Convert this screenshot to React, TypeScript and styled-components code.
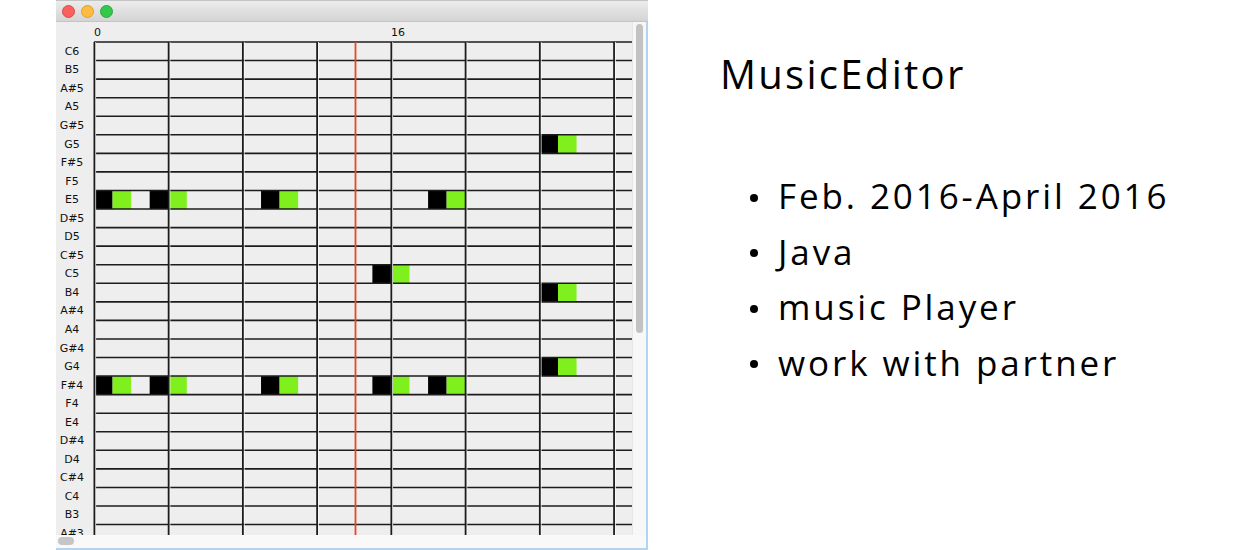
import styled, { createGlobalStyle } from 'styled-components';

// one beat / one pitch row, in px
const CELL = 18.56;
const BEATS = 32;
const PLAYHEAD = 261.5;

const PITCHES = [
    'C6', 'B5', 'A#5', 'A5', 'G#5', 'G5', 'F#5', 'F5', 'E5', 'D#5', 'D5', 'C#5', 'C5', 'B4',
    'A#4', 'A4', 'G#4', 'G4', 'F#4', 'F4', 'E4', 'D#4', 'D4', 'C#4', 'C4', 'B3', 'A#3',
];

const NOTES: { pitch: string; start: number; length: number }[] = [
    { pitch: 'G5', start: 24, length: 2 },
    { pitch: 'E5', start: 0, length: 2 },
    { pitch: 'E5', start: 3, length: 2 },
    { pitch: 'E5', start: 9, length: 2 },
    { pitch: 'E5', start: 18, length: 2 },
    { pitch: 'C5', start: 15, length: 2 },
    { pitch: 'B4', start: 24, length: 2 },
    { pitch: 'G4', start: 24, length: 2 },
    { pitch: 'F#4', start: 0, length: 2 },
    { pitch: 'F#4', start: 3, length: 2 },
    { pitch: 'F#4', start: 9, length: 2 },
    { pitch: 'F#4', start: 15, length: 2 },
    { pitch: 'F#4', start: 18, length: 2 },
];

const FACTS = ['Feb. 2016-April 2016', 'Java', 'music Player', 'work with partner'];

const GlobalStyle = createGlobalStyle`
    html, body {
        margin: 0;
        padding: 0;
        background: #fff;
    }
    body {
        width: 1250px;
        height: 550px;
        overflow: hidden;
    }
`;

const Page = styled.div`
    display: flex;
    align-items: flex-start;
    width: 1250px;
    height: 550px;
`;

const Window = styled.div`
    margin-left: 56px;
    width: 592px;
    height: 550px;
    flex: none;
    display: flex;
    flex-direction: column;
`;

const TitleBar = styled.div`
    height: 21px;
    flex: none;
    display: flex;
    align-items: center;
    gap: 6px;
    padding: 1px 0 0 6px;
    box-sizing: border-box;
    background: linear-gradient(#ececec, #d4d4d4);
    border-top: 1px solid #c4c4c4;
`;

const Light = styled.span<{ $fill: string; $edge: string }>`
    width: 11px;
    height: 11px;
    border-radius: 50%;
    background: ${p => p.$fill};
    border: 0.5px solid ${p => p.$edge};
`;

const Body = styled.div`
    flex: 1;
    display: grid;
    grid-template-columns: 1fr 14px;
    grid-template-rows: 513px 13px;
    border-top: 1px solid #a9cbeb;
    border-right: 2px solid #b3d3ef;
    border-bottom: 2px solid #b3d3ef;
    background: #eeeeee;
`;

const Viewport = styled.div`
    overflow: hidden;
    background: #eeeeee;
    font-family: 'DejaVu Sans', sans-serif;
    font-size: 11px;
    color: #111;
`;

const Ruler = styled.div`
    height: 20px;
    display: flex;
    align-items: center;
    padding-left: 38px;
`;

const RulerMark = styled.span`
    flex: none;
    width: ${CELL * 16}px;
`;

const Roll = styled.div`
    display: flex;
    align-items: flex-start;
`;

const Keys = styled.div`
    width: 38px;
    flex: none;
    padding-right: 6px;
    box-sizing: border-box;
    display: flex;
    flex-direction: column;
`;

const Key = styled.div`
    height: ${CELL}px;
    display: flex;
    align-items: center;
    justify-content: center;
`;

const Sheet = styled.svg`
    flex: none;
    display: block;
    overflow: visible;
`;

const VScroll = styled.div`
    background: #f7f7f7;
    border-left: 1px solid #e6e6e6;
    padding: 2px 0 0 3px;
`;

const VThumb = styled.div`
    width: 7px;
    height: 309px;
    border-radius: 4px;
    background: #c2c2c2;
`;

const HScroll = styled.div`
    grid-column: 1 / -1;
    background: #f9f9f9;
    padding: 2px 0 0 2px;
`;

const HThumb = styled.div`
    width: 16px;
    height: 8px;
    border-radius: 4px;
    background: #c6c6c6;
`;

const Info = styled.div`
    margin-left: 72px;
    padding-top: 54px;
    font-family: 'Open Sans', 'Noto Sans', sans-serif;
    font-weight: 500;
    color: #000;
`;

const Title = styled.h1`
    margin: 0;
    font-size: 40px;
    font-weight: 500;
    line-height: 39px;
    letter-spacing: 2.3px;
`;

const Facts = styled.ul`
    list-style: none;
    margin: 75px 0 0;
    padding: 0 0 0 30px;
`;

const Fact = styled.li`
    display: flex;
    align-items: center;
    gap: 20px;
    font-size: 35px;
    line-height: 55.5px;
    letter-spacing: 2.9px;
    white-space: nowrap;
`;

const Dot = styled.span`
    flex: none;
    width: 8px;
    height: 8px;
    margin-top: 4px;
    border-radius: 50%;
    background: #000;
`;

function NoteSheet() {
    const width = BEATS * CELL;
    const height = (PITCHES.length + 1) * CELL;
    return (
        <Sheet width={width} height={height} viewBox={`0 0 ${width} ${height}`}>
            {NOTES.map(n => {
                const y = PITCHES.indexOf(n.pitch) * CELL;
                return (
                    <g key={`${n.pitch}-${n.start}`}>
                        <rect x={n.start * CELL} y={y} width={CELL} height={CELL} fill="#000" />
                        <rect
                            x={(n.start + 1) * CELL}
                            y={y}
                            width={(n.length - 1) * CELL}
                            height={CELL}
                            fill="#7ff01e"
                        />
                    </g>
                );
            })}
            {Array.from({ length: PITCHES.length + 2 }, (_, i) => (
                <line key={`h${i}`} x1={0} x2={width} y1={i * CELL} y2={i * CELL} stroke="#1c1c1c" strokeWidth={1.6} />
            ))}
            {Array.from({ length: BEATS / 4 + 1 }, (_, i) => (
                <g key={`v${i}`}>
                    <line x1={i * 4 * CELL + 1.6} x2={i * 4 * CELL + 1.6} y1={0} y2={height} stroke="#fbfbfb" strokeWidth={1} />
                    <line x1={i * 4 * CELL + 0.4} x2={i * 4 * CELL + 0.4} y1={0} y2={height} stroke="#1c1c1c" strokeWidth={1.8} />
                </g>
            ))}
            <line x1={PLAYHEAD} x2={PLAYHEAD} y1={0} y2={height} stroke="#e8452a" strokeWidth={1.8} />
        </Sheet>
    );
}

export default function App() {
    return (
        <>
            <GlobalStyle />
            <Page>
                <Window>
                    <TitleBar>
                        <Light $fill="#fc605c" $edge="#de4a42" />
                        <Light $fill="#fdbc40" $edge="#de9f34" />
                        <Light $fill="#34c84a" $edge="#27aa35" />
                    </TitleBar>
                    <Body>
                        <Viewport>
                            <Ruler>
                                <RulerMark>0</RulerMark>
                                <RulerMark>16</RulerMark>
                            </Ruler>
                            <Roll>
                                <Keys>
                                    {PITCHES.map(p => (
                                        <Key key={p}>{p}</Key>
                                    ))}
                                </Keys>
                                <NoteSheet />
                            </Roll>
                        </Viewport>
                        <VScroll>
                            <VThumb />
                        </VScroll>
                        <HScroll>
                            <HThumb />
                        </HScroll>
                    </Body>
                </Window>
                <Info>
                    <Title>MusicEditor</Title>
                    <Facts>
                        {FACTS.map(f => (
                            <Fact key={f}>
                                <Dot />
                                {f}
                            </Fact>
                        ))}
                    </Facts>
                </Info>
            </Page>
        </>
    );
}
